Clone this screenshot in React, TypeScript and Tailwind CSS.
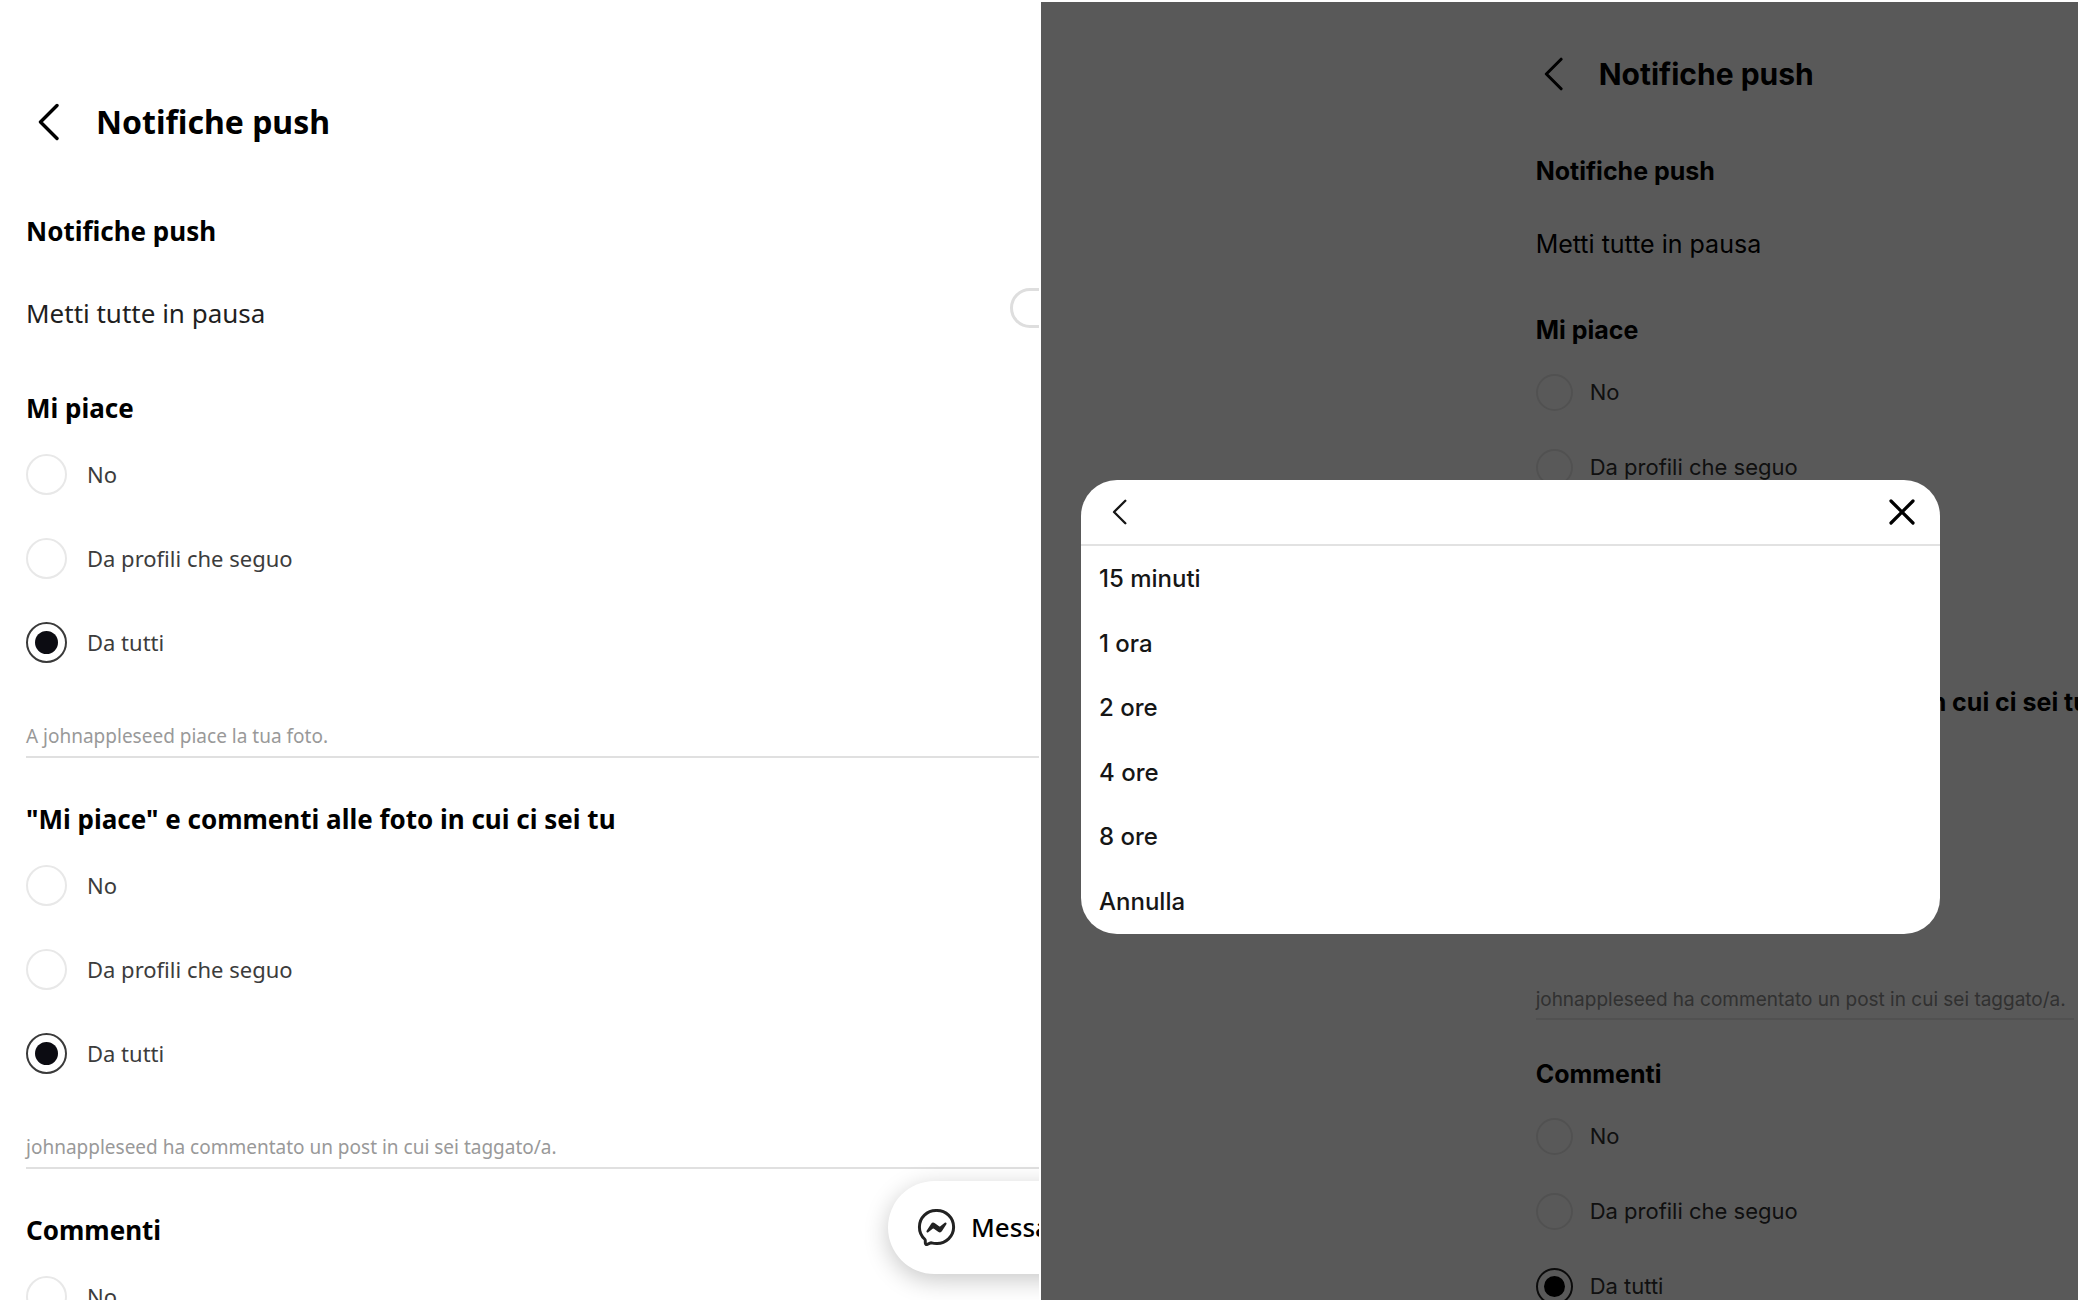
import { useId } from "react";

const left = {
  body: "pt-[101px] pl-[26px] font-['Noto_Sans',sans-serif]",
  header: "flex h-[42px] items-center gap-[37px] pl-3",
  chevron: "h-[38px] w-[21px]",
  title: "text-[32px] font-bold",
  heading: "text-[26px] leading-8 font-bold whitespace-nowrap",
  options: "mt-[30px] flex flex-col gap-[43px]",
  option: "flex h-[41px] items-center gap-5 text-[22px] text-[#3c3c3c]",
  radio:
    "size-[41px] shrink-0 appearance-none rounded-full border-2 border-[#e8e8e8] bg-clip-content p-[7px] checked:border-[#3a3a3a] checked:bg-[#0c0c12]",
  note: "mt-[59px] border-b-2 border-[#e0e0e0] pb-1.5 text-[19px] leading-7 whitespace-nowrap text-[#999]",
  firstNote: "",
  sections: "flex flex-col gap-[45px]",
};

const right: typeof left = {
  body: "pt-[52px] pl-[47.7%] pr-1 font-['Inter',sans-serif]",
  header: "flex h-10 items-center gap-9 pl-2",
  chevron: "h-[34px] w-[19px]",
  title: "text-[30px] font-bold",
  heading: "text-[25px] leading-8 font-bold whitespace-nowrap",
  options: "mt-7 flex flex-col gap-[38px]",
  option: "flex h-[37px] items-center gap-[17px] text-[22px] text-[#303030]",
  radio:
    "size-[37px] shrink-0 appearance-none rounded-full border-2 border-[#e8e8e8] bg-clip-content p-1.5 checked:border-[#222] checked:bg-black",
  note: "mt-[55px] border-b-2 border-[#e8e8e8] pb-1.5 text-[19px] leading-6 whitespace-nowrap text-[#8c8c8c]",
  firstNote: "border-transparent",
  sections: "flex flex-col gap-[38px]",
};

type Theme = typeof left;

const groups = [
  { title: "Mi piace", note: "A johnappleseed piace la tua foto." },
  {
    title: '"Mi piace" e commenti alle foto in cui ci sei tu',
    note: "johnappleseed ha commentato un post in cui sei taggato/a.",
  },
  { title: "Commenti", note: "" },
];

const choices = ["No", "Da profili che seguo", "Da tutti"];
const durations = ["15 minuti", "1 ora", "2 ore", "4 ore", "8 ore", "Annulla"];

function Chevron({ className }: { className: string }) {
  return (
    <svg
      viewBox="0 0 21 38"
      className={className}
      fill="none"
      stroke="currentColor"
      strokeWidth="3.4"
      strokeLinecap="round"
      strokeLinejoin="round"
      aria-hidden="true"
    >
      <path d="M19 2.5 2.5 19 19 35.5" />
    </svg>
  );
}

function Header({ theme }: { theme: Theme }) {
  return (
    <header className={theme.header}>
      <button type="button" aria-label="Indietro">
        <Chevron className={theme.chevron} />
      </button>
      <h1 className={theme.title}>Notifiche push</h1>
    </header>
  );
}

function RadioGroup({
  title,
  note,
  first,
  theme,
}: {
  title: string;
  note: string;
  first: boolean;
  theme: Theme;
}) {
  const id = useId();
  return (
    <section aria-labelledby={id}>
      <h2 id={id} className={theme.heading}>
        {title}
      </h2>
      <div className={theme.options}>
        {choices.map((choice) => (
          <label key={choice} className={theme.option}>
            <input type="radio" name={id} defaultChecked={choice === "Da tutti"} className={theme.radio} />
            {choice}
          </label>
        ))}
      </div>
      {note && <p className={first && theme.firstNote ? "mt-[55px] pb-2 text-[19px] leading-6 text-[#8c8c8c]" : theme.note}>{note}</p>}
    </section>
  );
}

function Groups({ theme }: { theme: Theme }) {
  return (
    <div className={theme.sections}>
      {groups.map((g, i) => (
        <RadioGroup key={g.title} title={g.title} note={g.note} first={i === 0} theme={theme} />
      ))}
    </div>
  );
}

function MessengerIcon() {
  return (
    <svg viewBox="0 0 24 24" className="size-[41px] shrink-0 text-[#222]" fill="none" aria-hidden="true">
      <path
        d="M12.003 2.001a9.705 9.705 0 1 1 0 19.4 10.876 10.876 0 0 1-2.895-.384.798.798 0 0 0-.533.04l-1.984.876a.801.801 0 0 1-1.123-.708l-.054-1.78a.806.806 0 0 0-.27-.569 9.49 9.49 0 0 1-3.14-7.175 9.65 9.65 0 0 1 10-9.7Z"
        stroke="currentColor"
        strokeWidth="1.739"
        strokeMiterlimit="10"
      />
      <path
        d="M17.79 10.132a.659.659 0 0 0-.962-.873l-2.556 2.05a.63.63 0 0 1-.758.002L11.06 9.47a1.576 1.576 0 0 0-2.277.42l-2.567 3.98a.659.659 0 0 0 .961.875l2.556-2.049a.63.63 0 0 1 .759-.002l2.452 1.84a1.576 1.576 0 0 0 2.278-.42Z"
        fill="currentColor"
      />
    </svg>
  );
}

function SettingsPane() {
  return (
    <main className="relative h-full overflow-hidden bg-white text-black">
      <div className={left.body}>
        <Header theme={left} />
        <h2 className="mt-[72px] text-[26px] leading-8 font-bold">Notifiche push</h2>
        <label className="mt-[41px] mr-[-39px] mb-[54px] flex items-start justify-between text-[26px] leading-[50px] text-[#1f1f1f]">
          Metti tutte in pausa
          <input
            type="checkbox"
            role="switch"
            className="h-10 w-[68px] appearance-none rounded-full border-3 border-[#dedede] bg-white"
          />
        </label>
        <Groups theme={left} />
      </div>
      <button
        type="button"
        className="absolute right-[-95px] bottom-[26px] flex h-[93px] w-[246px] items-center gap-3.5 rounded-full bg-white pl-7 font-['Noto_Sans',sans-serif] text-[26px] font-medium shadow-[0_6px_24px_rgba(0,0,0,0.22)]"
      >
        <MessengerIcon />
        Messaggi
      </button>
    </main>
  );
}

function PauseDialog() {
  return (
    <div
      role="dialog"
      aria-modal="true"
      aria-label="Metti tutte in pausa"
      className="w-full overflow-hidden rounded-[36px] bg-white font-['Inter',sans-serif] text-[#161616]"
    >
      <div className="flex h-[66px] items-center justify-between border-b-2 border-[#e2e2e2] pr-6 pl-[31px]">
        <button type="button" aria-label="Indietro">
          <Chevron className="h-[26px] w-[15px]" />
        </button>
        <button type="button" aria-label="Chiudi">
          <svg
            viewBox="0 0 28 28"
            className="size-7 text-black"
            fill="none"
            stroke="currentColor"
            strokeWidth="3.2"
            strokeLinecap="round"
            aria-hidden="true"
          >
            <path d="m3 3 22 22M25 3 3 25" />
          </svg>
        </button>
      </div>
      <ul className="grid h-[388px] auto-rows-fr pt-px">
        {durations.map((d) => (
          <li key={d} className="flex">
            <button type="button" className="w-full pl-[18px] text-left text-[24px] font-medium">
              {d}
            </button>
          </li>
        ))}
      </ul>
    </div>
  );
}

function DialogPane() {
  return (
    <section className="relative h-full overflow-hidden bg-white text-black">
      <div className={right.body}>
        <Header theme={right} />
        <h2 className="mt-[61px] text-[25px] leading-8 font-bold">Notifiche push</h2>
        <p className="mt-[37px] mb-[50px] text-[25px] leading-10 whitespace-nowrap">Metti tutte in pausa</p>
        <Groups theme={right} />
      </div>
      <div className="absolute inset-0 flex items-start bg-black/65 pt-[478px] pr-[138px] pl-10">
        <PauseDialog />
      </div>
    </section>
  );
}

export default function App() {
  return (
    <div className="flex h-screen overflow-hidden bg-white">
      <div className="h-full w-1/2 pr-px pb-0.5">
        <SettingsPane />
      </div>
      <div className="h-full w-1/2 py-0.5 pr-0.5 pl-px">
        <DialogPane />
      </div>
    </div>
  );
}
